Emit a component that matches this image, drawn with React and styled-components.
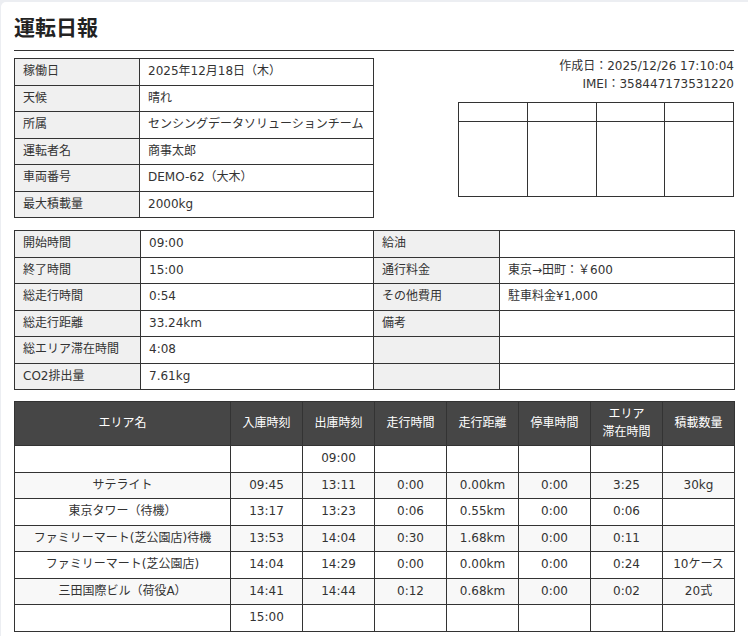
import React from "react";
import styled, { createGlobalStyle } from "styled-components";

const GlobalStyle = createGlobalStyle`
  html, body {
    margin: 0;
    padding: 0;
    background: #eceef2;
  }
  body {
    font-family: "DejaVu Sans", "Noto Sans CJK JP", sans-serif;
    font-size: 12px;
    color: #333;
  }
`;

const Card = styled.div`
  margin: 2px 0 0 1px;
  background: #fff;
  border-radius: 5px 0 0 0;
  padding: 10px 14px 20px 13px;
  min-height: 700px;
  box-sizing: border-box;
`;

const Title = styled.h1`
  margin: 0;
  font-size: 21px;
  font-weight: 700;
  line-height: 32px;
  color: #222;
  padding-bottom: 6px;
  border-bottom: 1px solid #333;
`;

const TopSection = styled.div`
  display: flex;
  justify-content: space-between;
  align-items: flex-start;
  margin-top: 7px;
`;

const Table = styled.table`
  border-collapse: collapse;
  table-layout: fixed;
  width: ${(p) => p.$width}px;
  margin-top: ${(p) => p.$mt || 0}px;
  font-size: 12px;
  color: #333;
`;

const Cell = styled.td`
  border: 1px solid #333;
  padding: 4px 8px;
  line-height: 17.5px;
  height: 17.5px;
  text-align: ${(p) => (p.$center ? "center" : "left")};
  background: ${(p) => (p.$label ? "#f0f0f0" : "transparent")};
  white-space: nowrap;
  overflow: hidden;
`;

const Aside = styled.div`
  width: 276px;
  display: flex;
  flex-direction: column;
  align-items: stretch;
`;

const Meta = styled.div`
  text-align: right;
  line-height: 17.5px;
  font-size: 12px;
  color: #333;
`;

const StampTable = styled.table`
  border-collapse: collapse;
  table-layout: fixed;
  width: 100%;
  margin-top: 9px;
`;

const StampCell = styled.td`
  border: 1px solid #333;
  padding: 0;
  height: ${(p) => (p.$head ? 17.7 : 74)}px;
`;

const HeadCell = styled.th`
  background: #464646;
  color: #fff;
  font-weight: 400;
  border: 1px solid #333;
  padding: 4px 4px;
  line-height: 17.6px;
  text-align: center;
  white-space: nowrap;
`;

const Row = styled.tr`
  background: ${(p) => (p.$alt ? "#f8f8f8" : "#fff")};
`;

const basicInfo = [
  ["稼働日", "2025年12月18日（木）"],
  ["天候", "晴れ"],
  ["所属", "センシングデータソリューションチーム"],
  ["運転者名", "商事太郎"],
  ["車両番号", "DEMO-62（大木）"],
  ["最大積載量", "2000kg"],
];

const summary = [
  ["開始時間", "09:00", "給油", ""],
  ["終了時間", "15:00", "通行料金", "東京→田町：￥600"],
  ["総走行時間", "0:54", "その他費用", "駐車料金¥1,000"],
  ["総走行距離", "33.24km", "備考", ""],
  ["総エリア滞在時間", "4:08", "", ""],
  ["CO2排出量", "7.61kg", "", ""],
];

const heads = [
  "エリア名",
  "入庫時刻",
  "出庫時刻",
  "走行時間",
  "走行距離",
  "停車時間",
  ["エリア", "滞在時間"],
  "積載数量",
];

const areaRows = [
  ["", "", "09:00", "", "", "", "", ""],
  ["サテライト", "09:45", "13:11", "0:00", "0.00km", "0:00", "3:25", "30kg"],
  ["東京タワー（待機）", "13:17", "13:23", "0:06", "0.55km", "0:00", "0:06", ""],
  ["ファミリーマート(芝公園店)待機", "13:53", "14:04", "0:30", "1.68km", "0:00", "0:11", ""],
  ["ファミリーマート(芝公園店)", "14:04", "14:29", "0:00", "0.00km", "0:00", "0:24", "10ケース"],
  ["三田国際ビル（荷役A）", "14:41", "14:44", "0:12", "0.68km", "0:00", "0:02", "20式"],
  ["", "15:00", "", "", "", "", "", ""],
];

export default function App() {
  return (
    <>
      <GlobalStyle />
      <Card>
        <Title>運転日報</Title>
        <TopSection>
          <Table $width={359}>
            <colgroup>
              <col style={{ width: 125 }} />
              <col style={{ width: 234 }} />
            </colgroup>
            <tbody>
              {basicInfo.map(([k, v]) => (
                <tr key={k}>
                  <Cell $label>{k}</Cell>
                  <Cell>{v}</Cell>
                </tr>
              ))}
            </tbody>
          </Table>
          <Aside>
            <Meta>
              作成日：2025/12/26 17:10:04
              <br />
              IMEI：358447173531220
            </Meta>
            <StampTable>
              <tbody>
                <tr>
                  {[0, 1, 2, 3].map((i) => (
                    <StampCell key={i} $head />
                  ))}
                </tr>
                <tr>
                  {[0, 1, 2, 3].map((i) => (
                    <StampCell key={i} />
                  ))}
                </tr>
              </tbody>
            </StampTable>
          </Aside>
        </TopSection>

        <Table $width={720} $mt={12}>
          <colgroup>
            <col style={{ width: 126 }} />
            <col style={{ width: 233 }} />
            <col style={{ width: 126 }} />
            <col style={{ width: 235 }} />
          </colgroup>
          <tbody>
            {summary.map((r, i) => (
              <tr key={i}>
                <Cell $label>{r[0]}</Cell>
                <Cell>{r[1]}</Cell>
                <Cell $label>{r[2]}</Cell>
                <Cell>{r[3]}</Cell>
              </tr>
            ))}
          </tbody>
        </Table>

        <Table $width={720} $mt={11}>
          <colgroup>
            <col style={{ width: 216 }} />
            {[0, 1, 2, 3, 4, 5, 6].map((i) => (
              <col key={i} style={{ width: 72 }} />
            ))}
          </colgroup>
          <thead>
            <tr>
              {heads.map((h, i) => (
                <HeadCell key={i}>
                  {Array.isArray(h) ? (
                    <>
                      {h[0]}
                      <br />
                      {h[1]}
                    </>
                  ) : (
                    h
                  )}
                </HeadCell>
              ))}
            </tr>
          </thead>
          <tbody>
            {areaRows.map((r, i) => (
              <Row key={i} $alt={i % 2 === 1}>
                {r.map((c, j) => (
                  <Cell key={j} $center>
                    {c}
                  </Cell>
                ))}
              </Row>
            ))}
          </tbody>
        </Table>
      </Card>
    </>
  );
}
